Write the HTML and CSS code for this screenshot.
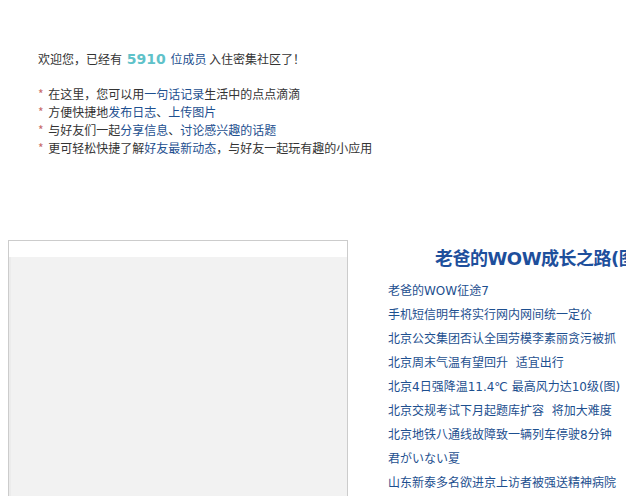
FILE: index.html
```html
<!DOCTYPE html>
<html lang="zh-CN">
<head>
    <meta charset="UTF-8">
    <meta name="viewport" content="width=device-width, initial-scale=1.0">
    <title>密集社区</title>
    <link rel="stylesheet" href="styles.css">
</head>
<body>
    <div class="intro">
        <p class="welcome">欢迎您，已经有 <span class="count">5910</span> <a href="#">位成员</a> 入住密集社区了！</p>
        <ul class="features">
            <li><span class="star">*</span> 在这里，您可以用<a href="#">一句话记录</a>生活中的点点滴滴</li>
            <li><span class="star">*</span> 方便快捷地<a href="#">发布日志</a>、<a href="#">上传图片</a></li>
            <li><span class="star">*</span> 与好友们一起<a href="#">分享信息</a>、<a href="#">讨论感兴趣的话题</a></li>
            <li><span class="star">*</span> 更可轻松快捷了解<a href="#">好友最新动态</a>，与好友一起玩有趣的小应用</li>
        </ul>
    </div>

    <div class="main">
        <div class="login-box">
            <div class="login-head"></div>
            <div class="login-body"></div>
        </div>

        <div class="news">
            <h2 class="news-title">老爸的WOW成长之路(图)</h2>
            <ul class="news-list">
                <li><a href="#">老爸的WOW征途7</a></li>
                <li><a href="#">手机短信明年将实行网内网间统一定价</a></li>
                <li><a href="#">北京公交集团否认全国劳模李素丽贪污被抓</a></li>
                <li><a href="#">北京周末气温有望回升&nbsp; 适宜出行</a></li>
                <li><a href="#">北京4日强降温11.4℃ 最高风力达10级(图)</a></li>
                <li><a href="#">北京交规考试下月起题库扩容&nbsp; 将加大难度</a></li>
                <li><a href="#">北京地铁八通线故障致一辆列车停驶8分钟</a></li>
                <li><a href="#">君がいない夏</a></li>
                <li><a href="#">山东新泰多名欲进京上访者被强送精神病院</a></li>
            </ul>
        </div>
    </div>
</body>
</html>
```

FILE: styles.css
```css
body {
    margin: 0;
    font-family: "Noto Sans CJK SC", "Liberation Sans", sans-serif;
    font-size: 12px;
    color: #333;
    background: #fff;
    overflow: hidden;
}
a {
    color: #1d4f8f;
    text-decoration: none;
}
ul {
    list-style: none;
    margin: 0;
    padding: 0;
}

.intro {
    padding: 50px 0 0 38px;
    line-height: 18px;
}
.welcome {
    margin: 0 0 17px;
}
.count {
    color: #5fc2c9;
    font-family: "DejaVu Sans", sans-serif;
    font-weight: bold;
    font-size: 14px;
    margin: 0 2px;
}
.star {
    color: #c86a6a;
    margin-right: 2px;
}

.main {
    display: flex;
    margin-top: 83px;
    padding-left: 8px;
}
.login-box {
    flex: none;
    width: 338px;
    height: 260px;
    border: 1px solid #ccc;
    border-bottom: none;
    display: flex;
    flex-direction: column;
}
.login-head {
    height: 16px;
    background: #fff;
}
.login-body {
    flex: 1;
    background: #f2f2f2;
    border-left: 2px solid #ececec;
}

/* news column runs past the window edge, as on the original page */
.news {
    flex: none;
    padding: 7px 0 0 40px;
    white-space: nowrap;
    font-family: "DejaVu Sans", "Noto Sans CJK SC", sans-serif;
}
.news-title {
    margin: 0 0 8px;
    padding-left: 47px;
    font-size: 18px;
    line-height: 24px;
    color: #1e4f9c;
    font-weight: bold;
    letter-spacing: -0.5px;
}
.news-list li {
    line-height: 24px;
}
```
